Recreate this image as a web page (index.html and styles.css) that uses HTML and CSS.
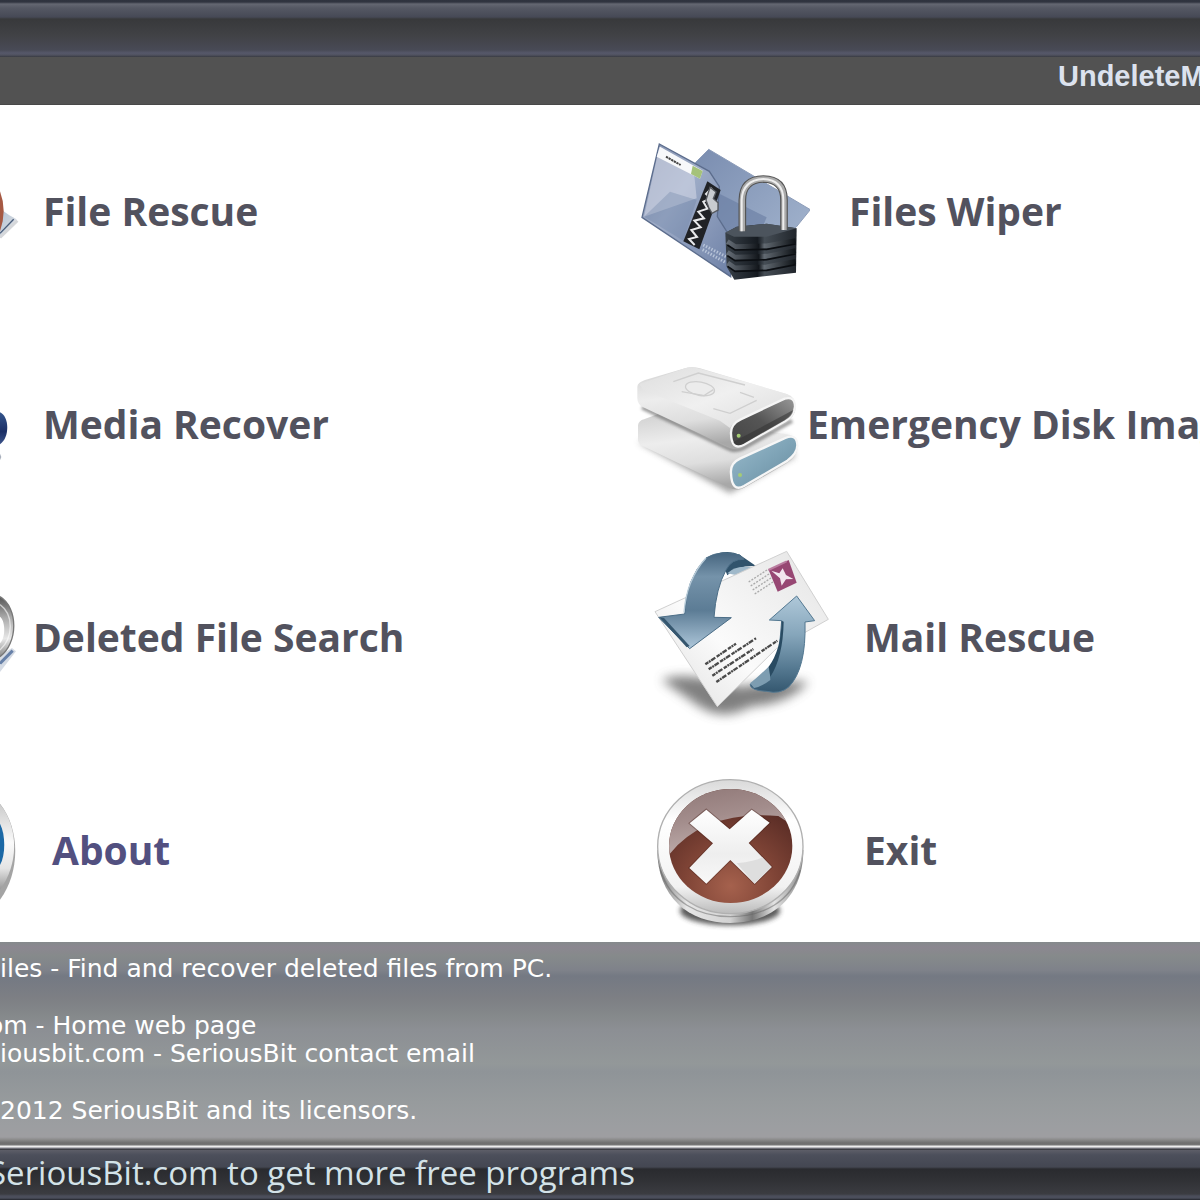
FILE: index.html
```html
<!DOCTYPE html>
<html lang="en">
<head>
<meta charset="utf-8">
<title>UndeleteMyFiles</title>
<link rel="stylesheet" href="styles.css">
</head>
<body>
<div class="app">
  <header>
    <div class="titlebar"></div>
    <div class="brand"><h1>UndeleteMyFiles</h1></div>
  </header>
  <main>
    <nav class="column column-left">
      <button class="tool slot-m" type="button">
        <svg class="icon" width="20" height="120" viewBox="0 0 60 360" aria-hidden="true">
          <defs>
            <linearGradient id="paper" x1="0" y1="0" x2="1" y2="1"><stop offset="0" stop-color="#b4c4d8"/><stop offset=".55" stop-color="#cbd3dc"/><stop offset="1" stop-color="#fff"/></linearGradient>
          </defs>
          <path d="M0 170 L28 190 L50 202 L0 256Z" fill="url(#paper)"/>
          <path d="M0 256 L52 206" stroke="#d5d7da" stroke-width="9"/>
          <path d="M0 244 L41 202" stroke="#465a78" stroke-width="4"/>
          <path d="M0 118 Q22 176 0 238Z" fill="#a65943"/>
        </svg>
        <span class="label">File Rescue</span>
      </button>
      <button class="tool slot-m" type="button">
        <svg class="icon" width="20" height="120" viewBox="0 0 60 360" aria-hidden="true">
          <defs><linearGradient id="navy" x1="0" y1="0" x2="0" y2="1"><stop offset="0" stop-color="#34558c"/><stop offset=".6" stop-color="#1b2f66"/><stop offset="1" stop-color="#3c548a"/></linearGradient></defs>
          <path d="M0 142 C28 154 30 218 0 238Z" fill="url(#navy)"/>
          <path d="M0 266 L4 276 L0 286Z" fill="#a9b0bd"/>
        </svg>
        <span class="label">Media Recover</span>
      </button>
      <button class="tool slot-s" type="button">
        <svg class="icon" width="20" height="120" viewBox="0 0 60 360" aria-hidden="true">
          <defs><linearGradient id="ring" x1="0" y1="0" x2="0" y2="1"><stop offset="0" stop-color="#555"/><stop offset=".35" stop-color="#aaa"/><stop offset=".7" stop-color="#e8e8e8"/><stop offset="1" stop-color="#888"/></linearGradient></defs>
          <path d="M0 232 L36 210 L48 220 L0 282Z" fill="#d5dbe4"/>
          <path d="M0 256 L38 218" stroke="#6780a8" stroke-width="9"/>
          <path d="M0 56 C56 90 54 196 0 236 L0 196 C20 176 14 124 0 116Z" fill="url(#ring)"/>
          <path d="M0 56 C56 90 54 196 0 236" fill="none" stroke="#777" stroke-width="4"/>
          <path d="M0 80 C42 110 40 180 0 216" fill="none" stroke="#fff" stroke-opacity=".6" stroke-width="4"/>
        </svg>
        <span class="label">Deleted File Search</span>
      </button>
      <button class="tool slot-l" type="button">
        <svg class="icon" width="20" height="120" viewBox="0 0 60 360" aria-hidden="true">
          <defs><linearGradient id="chrome" x1="0" y1="0" x2="0" y2="1"><stop offset="0" stop-color="#ccc"/><stop offset=".45" stop-color="#fafafa"/><stop offset=".75" stop-color="#e4e4e4"/><stop offset="1" stop-color="#999"/></linearGradient></defs>
          <path d="M0 38 C62 116 60 246 0 326Z" fill="#a4a4a4"/>
          <path d="M0 40 C57 110 56 222 0 296Z" fill="url(#chrome)"/>
          <path d="M0 98 C17 130 17 192 0 222Z" fill="#1c69a6"/>
        </svg>
        <span class="label label-visited">About</span>
      </button>
    </nav>
    <nav class="column column-right">
      <button class="tool slot-wide" type="button">
        <svg class="icon" width="180" height="163" viewBox="0 0 540 489" aria-hidden="true">
          <defs>
            <linearGradient id="back" x1="0" y1="0" x2="1" y2="1"><stop offset="0" stop-color="#7a8db0"/><stop offset="1" stop-color="#a6b7d0"/></linearGradient>
            <linearGradient id="front" x1="0" y1="0" x2="1" y2="1"><stop offset="0" stop-color="#8490ad"/><stop offset=".4" stop-color="#9fadc8"/><stop offset="1" stop-color="#6d80a6"/></linearGradient>
            <linearGradient id="lock" x1="0" y1="0" x2="1" y2="0"><stop offset="0" stop-color="#384048"/><stop offset=".45" stop-color="#151a20"/><stop offset=".55" stop-color="#454d55"/><stop offset="1" stop-color="#20252b"/></linearGradient>
            <linearGradient id="groove" x1="0" y1="0" x2="1" y2="0"><stop offset="0" stop-color="#656d76"/><stop offset=".46" stop-color="#12161b"/><stop offset=".54" stop-color="#626a72"/><stop offset="1" stop-color="#0e1216"/></linearGradient>
          </defs>
          <path d="M196 98 L236 58 L541 239 L498 292 L300 400 L230 330Z" fill="url(#back)" stroke="#8c9cb9" stroke-width="3"/>
          <path d="M265 190 L410 262 L390 310 L230 300Z" fill="#64799f" opacity=".55"/>
          <path d="M88 42 L238 124 L268 170 L262 260 L300 320 L302 440 L36 262Z" fill="url(#front)" stroke="#5c6d8d" stroke-width="4"/>
          <path d="M88 50 L190 108 L200 205 L42 260Z" fill="#d0d6e4" opacity=".6"/>
          <path d="M120 185 L200 210 L160 332 L42 260Z" fill="#657aa0" opacity=".3"/>
          <path d="M90 50 L218 122 L210 146 L80 80Z" fill="#f7f8fa"/>
          <path d="M188 107 L218 123 L210 146 L183 132Z" fill="#a5c27a"/>
          <path d="M108 80 L152 105" stroke="#444" stroke-width="6" stroke-dasharray="7 2"/>
          <path d="M232 154 L272 180 L208 358 L160 334Z" fill="#202226"/>
          <path d="M246 174 L228 192 L242 205 L220 215 L232 236 L205 245 L222 265 L193 272 L212 292 L184 300 L201 321 L177 327 L194 345" fill="none" stroke="#e8e9eb" stroke-width="6"/>
          <path d="M240 172 L258 186 L250 206 L264 218 L264 240 L246 250 L236 232 L228 210Z" fill="#c9ccd0" stroke="#56595e" stroke-width="4"/>
          <path d="M220 345 L292 382 M218 359 L286 397" stroke="#ccd7e7" stroke-width="9" stroke-dasharray="4 5" opacity=".75"/>
          <path d="M286 308 L320 290 L410 281 L500 295 L498 428 L313 449 L290 410Z" fill="url(#lock)"/>
          <path d="M286 308 L320 290 L410 281 L500 295 L410 320 L312 320Z" fill="#4c545d"/>
          <path d="M337 302 V210 Q338 148 400 147 Q462 148 462 210 V298" fill="none" stroke="#555" stroke-width="23"/>
          <path d="M337 304 V210 Q338 148 400 147 Q462 148 462 210 V300" fill="none" stroke="#aaa" stroke-width="16"/>
          <path d="M335 304 V210 Q338 150 400 147 Q460 150 460 210 V300" fill="none" stroke="#eee" stroke-width="6"/>
          <path d="M292 335 L315 350 L410 348 L497 332 M292 367 L315 382 L410 379 L497 362 M293 399 L315 414 L410 411 L497 394" fill="none" stroke="url(#groove)" stroke-width="15"/>
          <path d="M292 345 L315 360 L410 358 L497 342 M292 377 L315 392 L410 389 L497 372 M293 409 L315 424 L410 421 L497 404" fill="none" stroke="#0b0e12" stroke-width="5"/>
        </svg>
        <span class="label">Files Wiper</span>
      </button>
      <button class="tool slot-disk" type="button">
        <svg class="icon" width="170" height="149" viewBox="0 0 510 447" aria-hidden="true">
          <defs>
            <linearGradient id="side" x1="0" y1="0" x2=".25" y2="1"><stop offset="0" stop-color="#d0d0d0"/><stop offset=".4" stop-color="#ededed"/><stop offset=".7" stop-color="#dedede"/><stop offset="1" stop-color="#a8a8a8"/></linearGradient>
            <linearGradient id="top" x1="0" y1="0" x2="1" y2="1"><stop offset="0" stop-color="#dedede"/><stop offset=".5" stop-color="#f0f0f0"/><stop offset="1" stop-color="#dcdcdc"/></linearGradient>
            <linearGradient id="blue" x1="0" y1="0" x2="1" y2="1"><stop offset="0" stop-color="#9bbccd"/><stop offset=".5" stop-color="#7fa4b7"/><stop offset="1" stop-color="#66899c"/></linearGradient>
            <linearGradient id="dark" x1="0" y1="1" x2="1" y2="0"><stop offset="0" stop-color="#444"/><stop offset=".5" stop-color="#555"/><stop offset="1" stop-color="#999"/></linearGradient>
            <filter id="soft" x="-20%" y="-20%" width="140%" height="140%"><feGaussianBlur stdDeviation="9"/></filter>
            <filter id="contact" x="-20%" y="-20%" width="140%" height="140%"><feGaussianBlur stdDeviation="5"/></filter>
          </defs>
          <path d="M24 276 L300 430 L495 320 L470 260Z" fill="#666" opacity=".6" filter="url(#soft)"/>
          <path d="M24 226 Q26 212 42 208 L90 190 L480 255 Q507 262 504 292 Q500 322 470 340 L342 413 Q318 425 296 412 L38 288 Q22 280 24 264Z" fill="url(#side)"/>
          <path d="M303 370 Q300 340 330 326 L466 264 Q501 250 502 286 Q502 310 472 332 L342 408 Q305 428 303 370Z" fill="url(#blue)" stroke="#f6f6f6" stroke-width="7"/>
          <path d="M36 172 L290 293 Q318 308 344 292 L486 212" fill="none" stroke="#555" stroke-width="12" opacity=".6" filter="url(#contact)"/>
          <path d="M22 110 Q22 98 45 90 L160 56 Q185 48 210 55 L470 132 Q498 140 497 174 Q496 198 468 216 L340 290 Q318 302 290 289 L40 172 Q22 163 22 145Z" fill="url(#side)"/>
          <path d="M28 102 L165 55 Q185 49 210 56 L470 132 Q490 140 460 150 L338 202 Q310 214 300 234 L270 212 L40 120Z" fill="url(#top)"/>
          <ellipse cx="210" cy="116" rx="44" ry="20" transform="rotate(10 210 116)" fill="#ececec" stroke="#cfcfcf" stroke-width="4"/>
          <path d="M155 125 L222 137 L250 119 M250 176 L300 190 L380 151 M330 127 L372 142 M130 95 L205 69 L345 105" fill="none" stroke="#cfcfcf" stroke-width="4"/>
          <path d="M303 250 Q302 222 332 208 L464 146 Q495 138 495 170 Q493 196 466 213 L342 284 Q304 304 303 250Z" fill="url(#dark)" stroke="#f5f5f5" stroke-width="7"/>
          <path d="M310 276 L490 180 Q488 198 465 211 L340 282 Q320 292 310 276Z" fill="#333" opacity=".55"/>
          <circle cx="326" cy="257" r="6" fill="#a5cc74"/><circle cx="330" cy="375" r="6" fill="#a5cc74"/>
        </svg>
        <span class="label">Emergency Disk Image</span>
      </button>
      <button class="tool slot-wider" type="button">
        <svg class="icon" width="210" height="195" viewBox="-30 0 630 585" aria-hidden="true">
          <defs>
            <linearGradient id="arrowDown" x1="0" y1="0" x2="0" y2="1"><stop offset="0" stop-color="#46657f"/><stop offset=".25" stop-color="#7593aa"/><stop offset=".6" stop-color="#5c7c95"/><stop offset="1" stop-color="#aec7da"/></linearGradient>
            <linearGradient id="arrowUp" x1="0" y1="0" x2="0" y2="1"><stop offset="0" stop-color="#afc8d9"/><stop offset=".4" stop-color="#86a6bb"/><stop offset=".75" stop-color="#557991"/><stop offset="1" stop-color="#34576f"/></linearGradient>
            <linearGradient id="letter" x1="0" y1="1" x2="1" y2="0"><stop offset="0" stop-color="#dedede"/><stop offset=".4" stop-color="#fbfbfb"/><stop offset="1" stop-color="#e4e4e4"/></linearGradient>
            <filter id="haze" x="-20%" y="-60%" width="140%" height="220%"><feGaussianBlur stdDeviation="16"/></filter>
          </defs>
          <path d="M65 420 Q130 390 300 440 Q420 420 505 425 Q450 490 330 500 Q250 545 180 500Z" fill="#555" opacity=".75" filter="url(#haze)"/>
          <path d="M348 78 L300 45 Q270 30 235 40 L262 106 Q290 76 348 78Z" fill="#31536c"/>
          <path d="M262 100 Q286 74 335 82 L290 106Z" fill="#a0b9ca"/>
          <path d="M45 215 L440 34 L565 238 L410 325 L232 500Z" fill="url(#letter)" stroke="#d0d0d0" stroke-width="3"/>
          <path d="M386 90 L446 60 L470 128 L413 155Z" fill="#974773"/>
          <path d="M394 92 L418 100 L428 85 L438 105 L460 117 L438 118 L425 137 L420 115Z" fill="#f2e6ee"/>
          <path d="M385 90 L440 64" stroke="#ba7da0" stroke-width="6"/>
          <g fill="none" stroke="#aaa" stroke-width="4" stroke-dasharray="6 4"><path d="M326 126 L384 88"/><path d="M332 138 L390 100"/><path d="M338 150 L396 112"/><path d="M344 162 L402 124"/></g>
          <g fill="none" stroke="#4a4a4a" stroke-width="7" stroke-dasharray="11 2 6 2 15 5">
            <path d="M196 373 L288 311"/><path d="M206 388 L348 295"/><path d="M217 407 L340 327"/><path d="M229 426 L412 302"/>
          </g>
          <path d="M134 222 Q138 115 198 54 Q240 28 300 45 L312 58 Q275 56 258 90 Q228 145 222 232 L274 233 L149 326 L56 232Z" fill="url(#arrowDown)" stroke="#4c6e87" stroke-width="3"/>
          <path d="M58 232 L140 322 L149 318 L72 234Z" fill="#35566e"/>
          <path d="M132 218 Q140 118 198 54" fill="none" stroke="#b9ccd9" stroke-width="4"/>
          <path d="M470 168 L524 242 L495 246 Q499 385 447 440 Q420 464 380 454 Q333 452 330 434 Q402 390 418 325 L425 242 L388 240Z" fill="url(#arrowUp)" stroke="#537891" stroke-width="3"/>
          <path d="M330 430 Q353 412 388 378 L391 420 Q365 440 342 444Z" fill="#7d9db1"/>
          <path d="M425 242 Q423 330 386 380 L391 410 Q429 352 431 245Z" fill="#294b62"/>
        </svg>
        <span class="label">Mail Rescue</span>
      </button>
      <button class="tool slot-wider" type="button">
        <svg class="icon" width="185" height="161" viewBox="-45 0 555 483" aria-hidden="true">
          <defs>
            <linearGradient id="rim" x1="0" y1="0" x2="0" y2="1"><stop offset="0" stop-color="#d9d9d9"/><stop offset=".3" stop-color="#fff"/><stop offset=".8" stop-color="#f2f2f2"/><stop offset="1" stop-color="#bbb"/></linearGradient>
            <linearGradient id="base" x1="0" y1="0" x2="1" y2="0"><stop offset="0" stop-color="#777"/><stop offset=".2" stop-color="#e6e6e6"/><stop offset=".5" stop-color="#d2d2d2"/><stop offset=".65" stop-color="#777"/><stop offset=".8" stop-color="#e4e4e4"/><stop offset="1" stop-color="#888"/></linearGradient>
            <radialGradient id="red" cx=".5" cy=".85" r=".75"><stop offset="0" stop-color="#a5614d"/><stop offset=".5" stop-color="#7f4436"/><stop offset="1" stop-color="#592c25"/></radialGradient>
            <linearGradient id="gloss" x1="0" y1="0" x2=".3" y2="1"><stop offset="0" stop-color="#8c7473"/><stop offset=".5" stop-color="#a38d8c"/><stop offset="1" stop-color="#c5b4b2"/></linearGradient>
            <linearGradient id="cross" x1="0" y1="0" x2="0" y2="1"><stop offset="0" stop-color="#fff"/><stop offset=".6" stop-color="#eee"/><stop offset="1" stop-color="#f8f8f8"/></linearGradient>
            <clipPath id="disc"><ellipse cx="257" cy="228" rx="185" ry="171"/></clipPath>
            <filter id="glow" x="-20%" y="-60%" width="140%" height="220%"><feGaussianBlur stdDeviation="8"/></filter>
          </defs>
          <ellipse cx="255" cy="422" rx="150" ry="44" fill="#333" opacity=".8" filter="url(#glow)"/>
          <path d="M37 240 C37 380 130 459 256 459 C382 459 475 380 475 240Z" fill="url(#base)"/>
          <path d="M46 300 C75 395 160 440 256 440 C352 440 440 395 466 300" fill="none" stroke="#666" stroke-width="4" opacity=".5"/>
          <ellipse cx="256" cy="230" rx="218" ry="201" fill="url(#rim)" stroke="#b0b0b0" stroke-width="4"/>
          <ellipse cx="257" cy="228" rx="185" ry="171" fill="url(#red)"/>
          <path d="M60 270 Q165 120 400 138 L450 170 L450 40 L60 40Z" fill="url(#gloss)" clip-path="url(#disc)"/>
          <path d="M184 119 L254 178 L320 119 L374 158 L311 219 L380 291 L329 341 L256 270 L184 341 L133 294 L204 220 L134 160Z" fill="#46201a" opacity=".4" stroke="#46201a" stroke-width="6"/>
          <path d="M184 119 L254 178 L320 119 L374 158 L311 219 L380 291 L329 341 L256 270 L184 341 L133 294 L204 220 L134 160Z" fill="url(#cross)"/>
          <path d="M275 280 Q330 274 352 262 L380 291 L329 341Z" fill="#dedede"/>
        </svg>
        <span class="label">Exit</span>
      </button>
    </nav>
  </main>
  <section class="info">
    <p>iles - Find and recover deleted files from PC.</p>
    <p class="spaced bleed">om - Home web page</p>
    <p>iousbit.com - SeriousBit contact email</p>
    <p class="spaced">2012 SeriousBit and its licensors.</p>
  </section>
  <footer><a class="bleed" href="#programs">SeriousBit.com to get more free programs</a></footer>
</div>
</body>
</html>
```
FILE: styles.css
```css
* { box-sizing: border-box; }
body { margin: 0; background: #fff; }
.app { overflow: hidden; }
.titlebar {
  height: 57px;
  background: linear-gradient(#2f333e 0, #30343f 2px, #646771 4px, #555863 8px, #464956 17px, #38393b 19px, #414246 36px, #484a56 50px, #56586a 53px, #505260 55px, #393b42 57px);
}
.brand {
  display: flex;
  justify-content: flex-end;
  height: 48px;
  background: #525252;
  border-bottom: 1px solid #484848;
}
h1 {
  width: 142px;
  margin: 0;
  font: bold 29px/38px "Liberation Sans", Arial, sans-serif;
  color: #dce2ee;
  white-space: nowrap;
}
main {
  display: grid;
  grid-template-columns: 21fr 19fr;
  margin-bottom: -15px;
}
.column {
  display: grid;
  grid-auto-rows: 213px;
  min-width: 0;
}
.tool {
  display: grid;
  align-items: center;
  padding: 0;
  border: 0;
  background: none;
  text-align: left;
  cursor: pointer;
}
.slot-s { grid-template-columns: 33px 1fr; }
.slot-m { grid-template-columns: 43px 1fr; }
.slot-l { grid-template-columns: 52px 1fr; }
.slot-disk { grid-template-columns: 177px 1fr; }
.slot-wide { grid-template-columns: 219px 1fr; }
.slot-wider { grid-template-columns: 234px 1fr; }
.icon { display: block; }
.label {
  padding-bottom: 2px;
  font: bold 39px/48px "Open Sans", "Noto Sans", sans-serif;
  color: #52525e;
  white-space: nowrap;
}
.label-visited { color: #525080; }
.info {
  position: relative;
  height: 208px;
  padding-top: 13px;
  background: linear-gradient(#858a8c 0, #8b8790 5px, #868a8b 14px, #7f828a 28px, #747983 34px, #7d7f84 56px, #85898b 74px, #8c8f94 88px, #939899 122px, #8f9498 130px, #979b9d 160px, #9c9ea1 184px, #9e9ea1 195px, #888 198px, #6e6e6e 201px, #777 203px, #ededed 204px, #ededed 205px, #85858e 206px, #25262c 208px);
  font: 25px/28px "DejaVu Sans", Verdana, sans-serif;
  color: #fff;
  white-space: nowrap;
}
.info p { margin: 0; }
.info .spaced { padding-top: 29px; }
.bleed { display: block; text-indent: -12px; }
footer {
  height: 50px;
  background: linear-gradient(#5d5e68 0, #4c4f5b 5px, #444752 17px, #2a2b2f 19px, #303135 30px, #3b3c41 44px, #4b4e5b 46px, #4b4e5b 48px, #22242b 50px);
}
footer a {
  font: 33px/46px "Open Sans", "Noto Sans", sans-serif;
  color: #d3e2e8;
  text-decoration: none;
  white-space: nowrap;
}
```
